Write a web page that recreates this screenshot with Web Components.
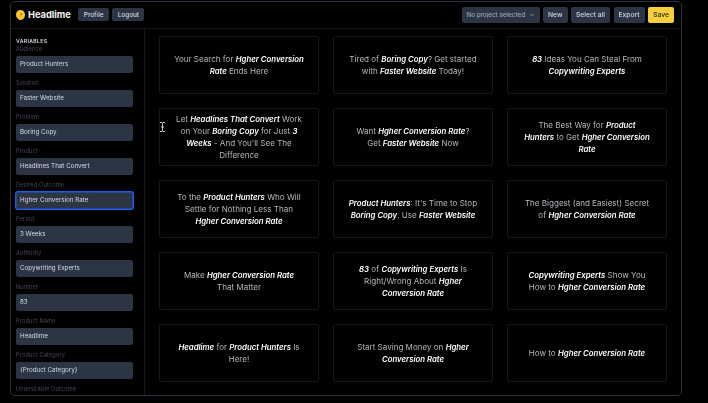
<!DOCTYPE html>
<html>
<head>
<meta charset="utf-8">
<title>Headlime</title>
<style>
  html, body { margin: 0; height: 100%; background: #000; overflow: hidden; }
  body { font-family: Inter, "Liberation Sans", sans-serif; }
  b { font-weight: 600; font-style: italic; font-size: 7.8px; color: #fff; }
</style>
</head>
<body>
<app-window>
  <top-bar slot="top">
    <brand-logo slot="left">Headlime</brand-logo>
    <ui-button slot="left" small style="width:30.5px">Profile</ui-button>
    <ui-button slot="left" small style="width:32px">Logout</ui-button>
    <ui-button slot="right" select style="width:77.5px">No project selected</ui-button>
    <ui-button slot="right" style="width:24.5px">New</ui-button>
    <ui-button slot="right" style="width:39px">Select all</ui-button>
    <ui-button slot="right" style="width:31px">Export</ui-button>
    <ui-button slot="right" primary style="width:26px">Save</ui-button>
  </top-bar>
  <var-panel slot="side">
    <var-field label="Audience">Product Hunters</var-field>
    <var-field label="Solution">Faster Website</var-field>
    <var-field label="Problem">Boring Copy</var-field>
    <var-field label="Product">Headlines That Convert</var-field>
    <var-field label="Desired Outcome" focused>Hgher Conversion Rate</var-field>
    <var-field label="Period">3 Weeks</var-field>
    <var-field label="Authority">Copywriting Experts</var-field>
    <var-field label="Number">83</var-field>
    <var-field label="Product Name">Headlime</var-field>
    <var-field label="Product Category">{Product Category}</var-field>
    <var-field label="Undesirable Outcome"></var-field>
  </var-panel>
  <card-grid slot="main">
    <headline-card>Your Search for <b>Hgher Conversion Rate</b> Ends Here</headline-card>
    <headline-card>Tired of <b>Boring Copy</b>? Get started with <b>Faster Website</b> Today!</headline-card>
    <headline-card><b>83</b> Ideas You Can Steal From <b>Copywriting Experts</b></headline-card>
    <headline-card>Let <b>Headlines That Convert</b> Work on Your <b>Boring Copy</b> for Just <b>3 Weeks</b> - And You'll See The Difference</headline-card>
    <headline-card>Want <b>Hgher Conversion Rate</b>?<br>Get <b>Faster Website</b> Now</headline-card>
    <headline-card>The Best Way for <b>Product<br>Hunters</b> to Get <b>Hgher Conversion Rate</b></headline-card>
    <headline-card>To the <b>Product Hunters</b> Who Will Settle for Nothing Less Than<br><b>Hgher Conversion Rate</b></headline-card>
    <headline-card><b>Product Hunters</b>: It's Time to Stop <b>Boring Copy</b>. Use <b>Faster Website</b></headline-card>
    <headline-card>The Biggest (and Easiest) Secret of <b>Hgher Conversion Rate</b></headline-card>
    <headline-card>Make <b>Hgher Conversion Rate</b><br>That Matter</headline-card>
    <headline-card><b>83</b> of <b>Copywriting Experts</b> Is Right/Wrong About <b>Hgher Conversion Rate</b></headline-card>
    <headline-card><b>Copywriting Experts</b> Show You How to <b>Hgher Conversion Rate</b></headline-card>
    <headline-card><b>Headlime</b> for <b>Product Hunters</b> Is Here!</headline-card>
    <headline-card>Start Saving Money on <b>Hgher Conversion Rate</b></headline-card>
    <headline-card>How to <b>Hgher Conversion Rate</b></headline-card>
  </card-grid>
</app-window>

<script>
class AppWindow extends HTMLElement {
  constructor() {
    super();
    this.attachShadow({ mode: 'open' });
  }

  connectedCallback() {
    this.shadowRoot.innerHTML = `
      <style>
        :host {
          display: flex;
          flex-direction: column;
          box-sizing: border-box;
          position: relative;
          width: 672px;
          height: 395px;
          margin: 1px 0 0 10px;
          background: #010102;
          border: 1px solid #2a3240;
          border-radius: 5px;
          overflow: hidden;
          filter: blur(0.25px);
        }
        .body {
          flex: 1;
          display: flex;
          min-height: 0;
        }
        .side {
          width: 133px;
          flex: none;
          border-right: 1px solid #12161d;
          overflow: hidden;
        }
        .main {
          flex: 1;
          min-width: 0;
        }
        .cursor {
          position: absolute;
          left: 148px;
          top: 120px;
        }
      </style>
      <slot name="top"></slot>
      <div class="body">
        <div class="side"><slot name="side"></slot></div>
        <div class="main"><slot name="main"></slot></div>
      </div>
      <svg class="cursor" width="7" height="10" viewBox="0 0 7 10" fill="none" stroke="#c9ccd1" stroke-width="1">
        <path d="M1 .5h2l.5 .7.5-.7h2M3.5 1.2v7.6M1 9.5h2l.5-.7.5 .7h2M2 5h3"/>
      </svg>
    `;
  }
}

class TopBar extends HTMLElement {
  constructor() {
    super();
    this.attachShadow({ mode: 'open' });
  }

  connectedCallback() {
    this.shadowRoot.innerHTML = `
      <style>
        :host {
          display: flex;
          align-items: center;
          justify-content: space-between;
          flex: none;
          box-sizing: border-box;
          height: 27px;
          padding: 0 7px 1px 5px;
          border-bottom: 1px solid #12161d;
        }
        .group {
          display: flex;
          align-items: center;
          gap: 3.5px;
        }
      </style>
      <div class="group"><slot name="left"></slot></div>
      <div class="group"><slot name="right"></slot></div>
    `;
  }
}

class BrandLogo extends HTMLElement {
  constructor() {
    super();
    this.attachShadow({ mode: 'open' });
  }

  connectedCallback() {
    this.shadowRoot.innerHTML = `
      <style>
        :host {
          display: flex;
          align-items: center;
          gap: 3px;
          margin-right: 4px;
          font-size: 9.3px;
          font-weight: 700;
          color: #f3f4f6;
        }
        svg { display: block; }
      </style>
      <svg width="9" height="10" viewBox="0 0 9 10">
        <path d="M4.5 0C7 0 9 2 9 4.6 9 7.4 7.6 10 4.8 10 3 10 2.6 9 1.6 8.4.6 7.8 0 6.4 0 4.8 0 2 2 0 4.5 0z" fill="#f6c52e"/>
        <circle cx="5.2" cy="4.2" r="1" fill="#a9790f"/>
      </svg>
      <slot></slot>
    `;
  }
}

class UiButton extends HTMLElement {
  constructor() {
    super();
    this.attachShadow({ mode: 'open' });
  }

  connectedCallback() {
    this.shadowRoot.innerHTML = `
      <style>
        :host {
          display: flex;
          align-items: center;
          justify-content: center;
          box-sizing: border-box;
          height: 16px;
          background: #2b3544;
          border-radius: 2px;
          font-size: 6.7px;
          font-weight: 500;
          color: #d4d8de;
          white-space: nowrap;
        }
        :host([small]) {
          height: 13px;
          font-size: 6.4px;
        }
        :host([select]) {
          gap: 4px;
          font-size: 6.3px;
          color: #9aa3af;
        }
        :host([primary]) {
          background: #f5cf3c;
          color: #2b2a1c;
        }
        svg { display: none; }
        :host([select]) svg { display: block; }
      </style>
      <slot></slot>
      <svg width="6" height="6" viewBox="0 0 6 6" fill="none" stroke="#9aa3af" stroke-width="1">
        <path d="M1.5 2.2L3 3.7l1.5-1.5"/>
      </svg>
    `;
  }
}

class VarPanel extends HTMLElement {
  constructor() {
    super();
    this.attachShadow({ mode: 'open' });
  }

  connectedCallback() {
    this.shadowRoot.innerHTML = `
      <style>
        :host {
          display: block;
          padding: 9px 11px 0 5px;
        }
        h2 {
          margin: 0;
          font-size: 5.2px;
          line-height: 7px;
          font-weight: 600;
          letter-spacing: .3px;
          color: #d8dbe0;
        }
        .list {
          display: flex;
          flex-direction: column;
          gap: 6px;
        }
      </style>
      <h2>VARIABLES</h2>
      <div class="list"><slot></slot></div>
    `;
  }
}

class VarField extends HTMLElement {
  constructor() {
    super();
    this.attachShadow({ mode: 'open' });
  }

  connectedCallback() {
    this.shadowRoot.innerHTML = `
      <style>
        :host {
          display: block;
        }
        label {
          display: block;
          height: 11px;
          line-height: 8px;
          font-size: 5.6px;
          letter-spacing: .15px;
          color: #434b58;
          white-space: nowrap;
        }
        .input {
          box-sizing: border-box;
          height: 17px;
          padding: 0 4px;
          background: #2b3544;
          border-radius: 2px;
          font-size: 6.25px;
          line-height: 17px;
          color: #d7dbe1;
          white-space: nowrap;
          overflow: hidden;
        }
        :host([focused]) .input {
          box-shadow: 0 0 0 1px #1a5fe8, inset 0 0 0 .5px #1a5fe8;
        }
      </style>
      <label>${this.getAttribute('label')}</label>
      <div class="input"><slot></slot></div>
    `;
  }
}

class CardGrid extends HTMLElement {
  constructor() {
    super();
    this.attachShadow({ mode: 'open' });
  }

  connectedCallback() {
    this.shadowRoot.innerHTML = `
      <style>
        :host {
          display: grid;
          grid-template-columns: repeat(3, 160px);
          grid-auto-rows: 58px;
          gap: 14px;
          padding: 7px 0 0 14px;
        }
      </style>
      <slot></slot>
    `;
  }
}

class HeadlineCard extends HTMLElement {
  constructor() {
    super();
    this.attachShadow({ mode: 'open' });
  }

  connectedCallback() {
    this.shadowRoot.innerHTML = `
      <style>
        :host {
          display: flex;
          align-items: center;
          justify-content: center;
          box-sizing: border-box;
          padding: 0 12px;
          border: 1px solid #141820;
          border-radius: 2px;
          font-size: 8.05px;
          line-height: 12.2px;
          text-align: center;
          color: #b4b7bc;
        }
        div { width: 100%; }
      </style>
      <div><slot></slot></div>
    `;
  }
}

customElements.define('app-window', AppWindow);
customElements.define('top-bar', TopBar);
customElements.define('brand-logo', BrandLogo);
customElements.define('ui-button', UiButton);
customElements.define('var-panel', VarPanel);
customElements.define('var-field', VarField);
customElements.define('card-grid', CardGrid);
customElements.define('headline-card', HeadlineCard);
</script>
</body>
</html>
